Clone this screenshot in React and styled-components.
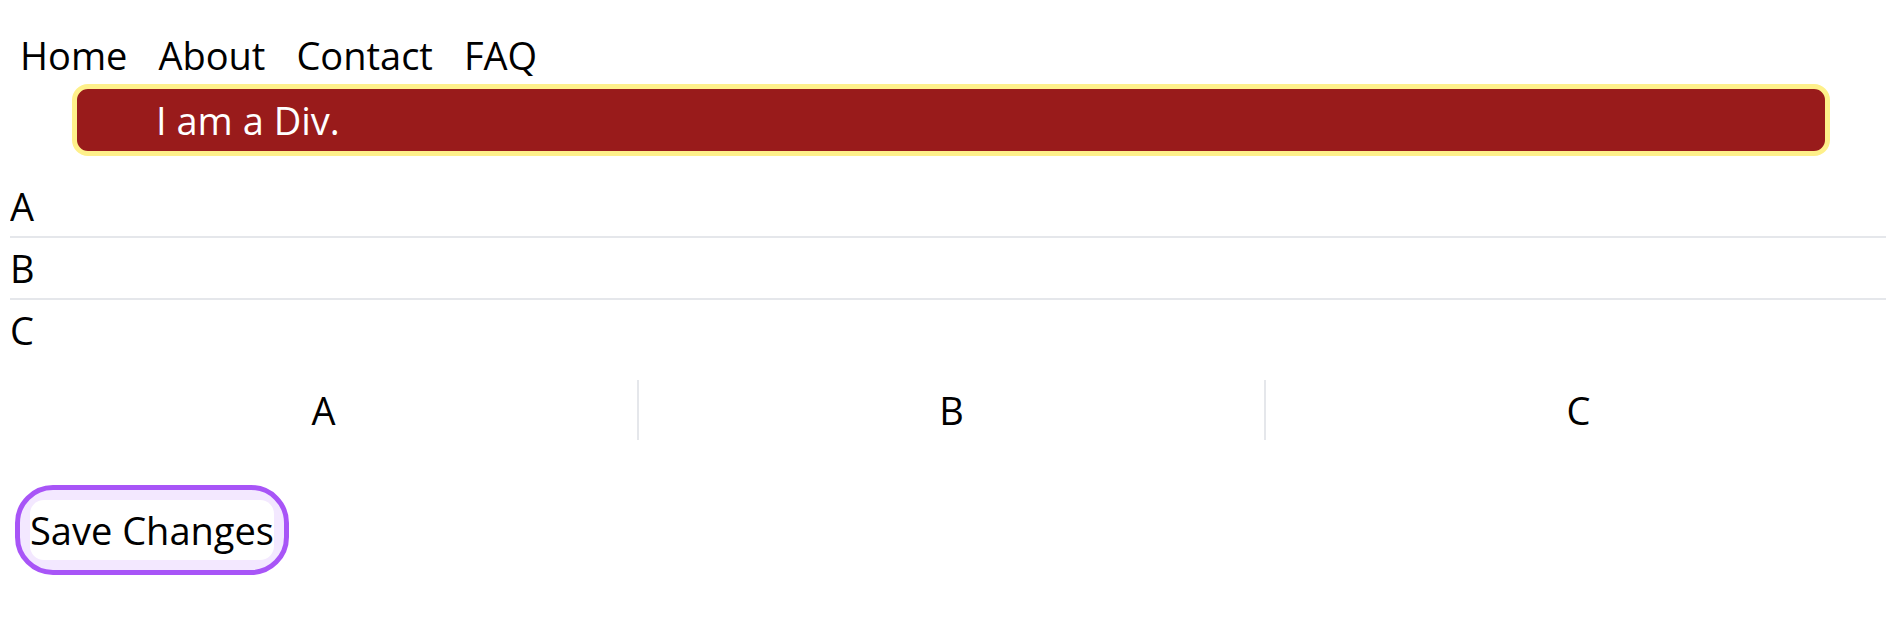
import React from 'react';
import styled, { createGlobalStyle } from 'styled-components';

const GlobalStyle = createGlobalStyle`
  body {
    margin: 10px 0 10px 10px;
    font-family: "Open Sans", "Noto Sans", sans-serif;
    font-size: 38px;
    line-height: 60px;
    color: #000;
    background: #fff;
  }
`;

const Nav = styled.nav`
  display: flex;
  gap: 31px;
  padding: 16px 10px 0;
  line-height: 58px;
`;

const NavLink = styled.a`
  color: #000;
  text-decoration: none;
`;

const RedBox = styled.div`
  margin: 0 56px 0 62px;
  padding: 1px 0 1px 79px;
  background: #991b1b;
  border: 5px solid #fef08a;
  border-radius: 16px;
  color: #fff;
`;

const List = styled.ul`
  list-style: none;
  margin: 20px 0 0;
  padding: 0;

  li + li {
    border-top: 2px solid #e5e7eb;
  }
`;

const Columns = styled.div`
  display: grid;
  grid-template-columns: repeat(3, 1fr);
  margin: 20px -5px 0 0;
`;

const Cell = styled.div`
  text-align: center;
  border-left: ${(p) => (p.$first ? 'none' : '2px solid #e5e7eb')};
`;

const SaveButton = styled.button`
  margin: 45px 0 0 5px;
  padding: 10px;
  border: 5px solid #a855f7;
  border-radius: 38px;
  background: #f3e8ff;
  font: inherit;
  color: #000;
  cursor: pointer;

  span {
    display: block;
    background: #fff;
    border-radius: 14px;
    line-height: 60px;
  }
`;

export default function App() {
  return (
    <>
      <GlobalStyle />
      <Nav>
        <NavLink href="#">Home</NavLink>
        <NavLink href="#">About</NavLink>
        <NavLink href="#">Contact</NavLink>
        <NavLink href="#">FAQ</NavLink>
      </Nav>
      <RedBox>I am a Div.</RedBox>
      <List>
        <li>A</li>
        <li>B</li>
        <li>C</li>
      </List>
      <Columns>
        <Cell $first>A</Cell>
        <Cell>B</Cell>
        <Cell>C</Cell>
      </Columns>
      <SaveButton>
        <span>Save Changes</span>
      </SaveButton>
    </>
  );
}
